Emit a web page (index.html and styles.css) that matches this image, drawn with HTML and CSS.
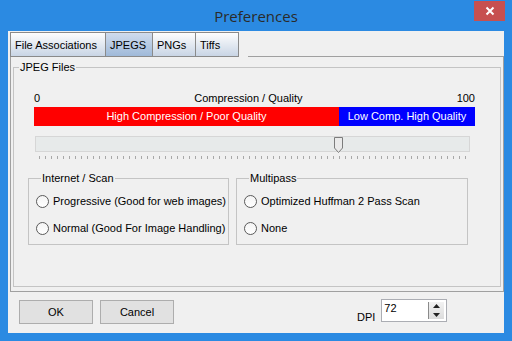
FILE: index.html
```html
<!DOCTYPE html>
<html lang="en">
<head>
  <meta charset="UTF-8">
  <title>Preferences</title>
  <link rel="stylesheet" href="styles.css">
</head>
<body>
  <div id="window">
    <div id="titlebar">
      <div id="title">Preferences</div>
      <button id="close-button" title="Close">
        <svg viewBox="0 0 10 10" width="10" height="10">
          <path d="M1.5 1.5 L8.5 8.5 M8.5 1.5 L1.5 8.5" stroke="#fff" stroke-width="2"></path>
        </svg>
      </button>
    </div>
    <div id="client">
      <div id="tabs">
        <div class="tab tab-first">File Associations</div>
        <div class="tab tab-active">JPEGS</div>
        <div class="tab">PNGs</div>
        <div class="tab">Tiffs</div>
        <div class="tab-filler"></div>
      </div>
      <div id="panel">
        <fieldset class="group" id="jpeg-group">
          <legend>JPEG Files</legend>
          <div class="scale">
            <span>0</span>
            <span>Compression / Quality</span>
            <span>100</span>
          </div>
          <div class="quality-bar">
            <div class="bar-low">High Compression / Poor Quality</div>
            <div class="bar-high">Low Comp. High Quality</div>
          </div>
          <div class="track">
            <svg class="thumb" viewBox="0 0 9 16" width="9" height="16">
              <polygon points="0.5,0.5 8.5,0.5 8.5,11 4.5,15.5 0.5,11" fill="#eaeaea" stroke="#7c7c7c"></polygon>
            </svg>
          </div>
          <div class="ticks"></div>
          <div class="subgroups">
            <fieldset class="group subgroup" id="scan-group">
              <legend>Internet / Scan</legend>
              <label class="radio"><span class="radio-dot"></span>Progressive (Good for web images)</label>
              <label class="radio"><span class="radio-dot"></span>Normal (Good For Image Handling)</label>
            </fieldset>
            <fieldset class="group subgroup" id="pass-group">
              <legend>Multipass</legend>
              <label class="radio"><span class="radio-dot"></span>Optimized Huffman 2 Pass Scan</label>
              <label class="radio"><span class="radio-dot"></span>None</label>
            </fieldset>
          </div>
        </fieldset>
      </div>
      <div id="footer">
        <button class="push">OK</button>
        <button class="push">Cancel</button>
        <span id="dpi-label">DPI</span>
        <div id="spin">
          <span id="spin-value">72</span>
          <div id="spin-buttons">
            <svg viewBox="0 0 7 4" width="7" height="4"><polygon points="0,4 7,4 3.5,0" fill="#222"></polygon></svg>
            <svg viewBox="0 0 7 4" width="7" height="4"><polygon points="0,0 7,0 3.5,4" fill="#222"></polygon></svg>
          </div>
        </div>
      </div>
    </div>
  </div>
</body>
</html>
```

FILE: styles.css
```css
html, body {
  margin: 0;
  padding: 0;
  width: 512px;
  height: 341px;
  overflow: hidden;
  background: #2b8ae2;
  font-family: "Liberation Sans", Arial, sans-serif;
  font-size: 11px;
  color: #000;
}
#window {
  width: 512px;
  height: 341px;
  display: flex;
  flex-direction: column;
}
#titlebar {
  height: 31px;
  display: flex;
  padding-left: 38px;
  box-sizing: border-box;
}
#title {
  flex: 1;
  text-align: center;
  font-family: "Open Sans", "Noto Sans", sans-serif;
  font-size: 15px;
  line-height: 32px;
  color: #2a2a2a;
}
#close-button {
  width: 31px;
  height: 20px;
  margin: 1px 7px 0 0;
  padding: 0;
  border: none;
  background: #c75050;
  display: flex;
  align-items: center;
  justify-content: center;
}
#client {
  margin: 0 8px;
  height: 302px;
  background: #f0f0f0;
  box-sizing: border-box;
  padding-top: 1px;
  display: flex;
  flex-direction: column;
}
#tabs {
  display: flex;
  height: 25px;
  margin-left: 2px;
}
.tab {
  border: 1px solid #8a8a8a;
  border-left: none;
  padding: 0 4px;
  line-height: 24px;
  background: linear-gradient(#fdfdfd, #c9d5e5);
  box-sizing: border-box;
}
.tab-first {
  border-left: 1px solid #8a8a8a;
}
.tab-active {
  background: linear-gradient(#d0dced, #9fb9d9);
}
.tab:nth-child(1) { width: 96px; }
.tab:nth-child(2) { width: 47px; }
.tab:nth-child(3) { width: 43px; }
.tab:nth-child(4) { width: 43px; }
.tab-filler {
  flex: 1;
  margin-left: 9px;
  border-bottom: 1px solid #a0a0a0;
}
#panel {
  margin-left: 2px;
  width: 494px;
  height: 235px;
  border: 1px solid #a0a0a0;
  border-top: none;
  box-sizing: border-box;
  padding: 4px 2px 0 2px;
}
.group {
  margin: 0;
  padding: 0;
  border: 1px solid #c4c4c4;
  min-width: 0;
}
.group legend {
  padding: 0 1px;
  margin-left: 5px;
  line-height: 13px;
  font-weight: normal;
}
#jpeg-group {
  height: 226px;
  box-sizing: border-box;
}
.scale {
  display: flex;
  justify-content: space-between;
  margin: 18px 25px 0 20px;
  line-height: 13px;
}
.quality-bar {
  display: flex;
  margin: 2px 25px 0 20px;
  height: 19px;
  color: #fff;
  line-height: 19px;
  text-align: center;
}
.bar-low {
  width: 305px;
  background: #ff0000;
}
.bar-high {
  flex: 1;
  background: #0000ff;
}
.track {
  position: relative;
  margin: 10px 0 0 21px;
  width: 435px;
  height: 16px;
  border: 1px solid #d6d6d6;
  background: #e7eaea;
  box-sizing: border-box;
}
.thumb {
  position: absolute;
  left: 298px;
  top: 0;
}
.ticks {
  margin: 4px 0 0 25px;
  width: 428px;
  height: 3px;
  background: repeating-linear-gradient(90deg, #a8a8a8 0, #a8a8a8 1px, transparent 1px, transparent 6px);
}
.subgroups {
  display: flex;
  gap: 7px;
  margin: 13px 0 0 14px;
}
.subgroup {
  padding: 10px 0 9px 7px;
  display: flex;
  flex-direction: column;
  gap: 14px;
}
#scan-group { width: 201px; box-sizing: border-box; }
#pass-group { width: 232px; box-sizing: border-box; }
.radio {
  display: flex;
  align-items: center;
  gap: 4px;
  height: 13px;
  line-height: 13px;
}
.radio-dot {
  width: 11px;
  height: 11px;
  border: 1px solid #5a5a5a;
  border-radius: 50%;
  background: linear-gradient(#f4f4f4, #ffffff);
}
#footer {
  flex: 1;
  display: flex;
  align-items: flex-start;
  padding: 8px 0 0 11px;
}
.push {
  width: 74px;
  height: 24px;
  margin-right: 7px;
  border: 1px solid #adadad;
  background: #e1e1e1;
  font-family: "Liberation Sans", Arial, sans-serif;
  font-size: 11px;
  color: #000;
  padding: 0;
}
#dpi-label {
  margin: 11px 6px 0 176px;
  line-height: 13px;
}
#spin {
  width: 66px;
  height: 23px;
  margin-top: -1px;
  border: 1px solid #abadb3;
  background: #fff;
  box-sizing: border-box;
  display: flex;
  justify-content: space-between;
}
#spin-value {
  padding: 2px 0 0 2px;
  line-height: 13px;
}
#spin-buttons {
  width: 15px;
  margin: 2px 2px 2px 0;
  border-left: 1px solid #8a8a8a;
  display: flex;
  flex-direction: column;
  align-items: center;
  justify-content: space-around;
  background: linear-gradient(#f2f2f2, #dcdcdc);
}
```
